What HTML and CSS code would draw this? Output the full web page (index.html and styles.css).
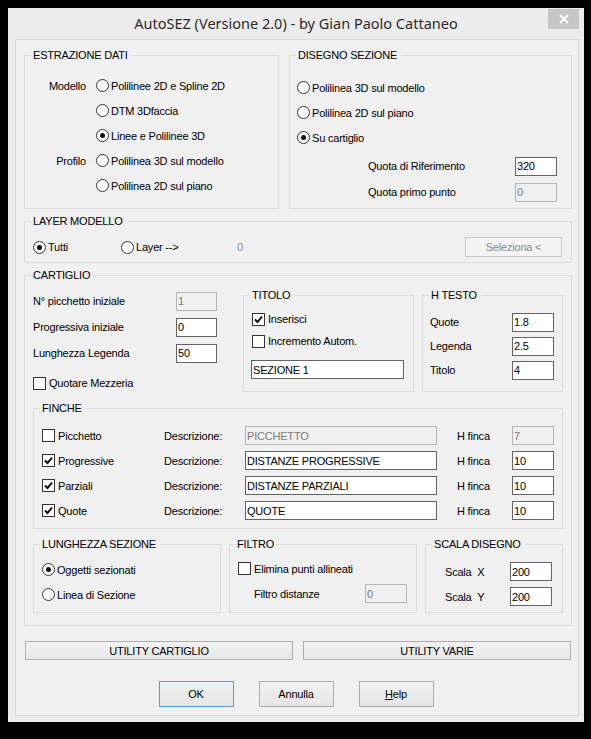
FILE: index.html
```html
<!DOCTYPE html>
<html lang="it">
<head>
<meta charset="utf-8">
<title>AutoSEZ</title>
<link rel="stylesheet" href="styles.css">
</head>
<body>
<div class="window">
  <div class="titlebar">
    <span></span>
    <span class="title">AutoSEZ (Versione 2.0) - by Gian Paolo Cattaneo</span>
    <span class="close"><svg width="10" height="10" viewBox="0 0 10 10"><path d="M1 1 L9 9 M9 1 L1 9" stroke="#fff" stroke-width="1.8" fill="none"/></svg></span>
  </div>
  <div class="panel">
    <div class="row-top">
      <fieldset class="group g-estr">
        <legend>ESTRAZIONE DATI</legend>
        <div class="estr-grid">
          <span class="lbl-r">Modello</span>
          <span class="opt"><span class="radio"></span>Polilinee 2D e Spline 2D</span>
          <span></span>
          <span class="opt"><span class="radio"></span>DTM 3Dfaccia</span>
          <span></span>
          <span class="opt"><span class="radio on"></span>Linee e Polilinee 3D</span>
          <span class="lbl-r">Profilo</span>
          <span class="opt"><span class="radio"></span>Polilinea 3D sul modello</span>
          <span></span>
          <span class="opt"><span class="radio"></span>Polilinea 2D sul piano</span>
        </div>
      </fieldset>
      <fieldset class="group g-dis">
        <legend>DISEGNO SEZIONE</legend>
        <div class="dis-opts">
          <span class="opt"><span class="radio"></span>Polilinea 3D sul modello</span>
          <span class="opt"><span class="radio"></span>Polilinea 2D sul piano</span>
          <span class="opt"><span class="radio on"></span>Su cartiglio</span>
        </div>
        <div class="quota-grid">
          <span>Quota di Riferimento</span>
          <input class="tb w42" type="text" value="320">
          <span>Quota primo punto</span>
          <input class="tb w42" type="text" value="0" disabled>
        </div>
      </fieldset>
    </div>

    <fieldset class="group g-layer">
      <legend>LAYER MODELLO</legend>
      <div class="layer-row">
        <span class="opt o-tutti"><span class="radio on"></span>Tutti</span>
        <span class="opt o-layer"><span class="radio"></span>Layer --&gt;</span>
        <span class="dim">0</span>
        <span class="btn btn-dis sel">Seleziona &lt;</span>
      </div>
    </fieldset>

    <fieldset class="group g-cart">
      <legend>CARTIGLIO</legend>
      <div class="cart-top">
        <div class="cart-left">
          <div class="lrow"><span>N° picchetto iniziale</span><input class="tb w41" type="text" value="1" disabled></div>
          <div class="lrow"><span>Progressiva iniziale</span><input class="tb w41" type="text" value="0"></div>
          <div class="lrow"><span>Lunghezza Legenda</span><input class="tb w41" type="text" value="50"></div>
          <div class="lrow lrow-chk"><span class="opt chk-opt"><span class="check"></span>Quotare Mezzeria</span></div>
        </div>
        <fieldset class="group g-titolo">
          <legend>TITOLO</legend>
          <div class="trow"><span class="opt chk-opt"><span class="check on"><svg width="11" height="11" viewBox="0 0 11 11"><path d="M2 5.5 L4.5 8 L9 2.5" stroke="#000" stroke-width="1.9" fill="none"/></svg></span>Inserisci</span></div>
          <div class="trow"><span class="opt chk-opt"><span class="check"></span>Incremento Autom.</span></div>
          <input class="tb titolo-in" type="text" value="SEZIONE 1">
        </fieldset>
        <fieldset class="group g-htesto">
          <legend>H TESTO</legend>
          <div class="ht-grid">
            <span>Quote</span><input class="tb w42" type="text" value="1.8">
            <span>Legenda</span><input class="tb w42" type="text" value="2.5">
            <span>Titolo</span><input class="tb w42" type="text" value="4">
          </div>
        </fieldset>
      </div>

      <fieldset class="group g-finche">
        <legend>FINCHE</legend>
        <div class="finche-grid">
          <span class="opt chk-opt"><span class="check"></span>Picchetto</span>
          <span>Descrizione:</span>
          <input class="tb desc" type="text" value="PICCHETTO" disabled>
          <span></span>
          <span>H finca</span>
          <input class="tb w42" type="text" value="7" disabled>

          <span class="opt chk-opt"><span class="check on"><svg width="11" height="11" viewBox="0 0 11 11"><path d="M2 5.5 L4.5 8 L9 2.5" stroke="#000" stroke-width="1.9" fill="none"/></svg></span>Progressive</span>
          <span>Descrizione:</span>
          <input class="tb desc" type="text" value="DISTANZE PROGRESSIVE">
          <span></span>
          <span>H finca</span>
          <input class="tb w42" type="text" value="10">

          <span class="opt chk-opt"><span class="check on"><svg width="11" height="11" viewBox="0 0 11 11"><path d="M2 5.5 L4.5 8 L9 2.5" stroke="#000" stroke-width="1.9" fill="none"/></svg></span>Parziali</span>
          <span>Descrizione:</span>
          <input class="tb desc" type="text" value="DISTANZE PARZIALI">
          <span></span>
          <span>H finca</span>
          <input class="tb w42" type="text" value="10">

          <span class="opt chk-opt"><span class="check on"><svg width="11" height="11" viewBox="0 0 11 11"><path d="M2 5.5 L4.5 8 L9 2.5" stroke="#000" stroke-width="1.9" fill="none"/></svg></span>Quote</span>
          <span>Descrizione:</span>
          <input class="tb desc" type="text" value="QUOTE">
          <span></span>
          <span>H finca</span>
          <input class="tb w42" type="text" value="10">
        </div>
      </fieldset>

      <div class="cart-bottom">
        <fieldset class="group g-lung">
          <legend>LUNGHEZZA SEZIONE</legend>
          <div class="brow"><span class="opt"><span class="radio on"></span>Oggetti sezionati</span></div>
          <div class="brow"><span class="opt"><span class="radio"></span>Linea di Sezione</span></div>
        </fieldset>
        <fieldset class="group g-filtro">
          <legend>FILTRO</legend>
          <div class="brow"><span class="opt chk-opt"><span class="check"></span>Elimina punti allineati</span></div>
          <div class="brow filtro-row"><span>Filtro distanze</span><input class="tb w42" type="text" value="0" disabled></div>
        </fieldset>
        <fieldset class="group g-scala">
          <legend>SCALA DISEGNO</legend>
          <div class="scala-grid">
            <span>Scala&nbsp;&nbsp;X</span><input class="tb w42" type="text" value="200">
            <span>Scala&nbsp;&nbsp;Y</span><input class="tb w42" type="text" value="200">
          </div>
        </fieldset>
      </div>
    </fieldset>

    <div class="util-row">
      <span class="btn">UTILITY CARTIGLIO</span>
      <span class="btn">UTILITY VARIE</span>
    </div>

    <div class="ok-row">
      <span class="btn btn-big btn-def">OK</span>
      <span class="btn btn-big">Annulla</span>
      <span class="btn btn-big"><u>H</u>elp</span>
    </div>
  </div>
</div>
</body>
</html>
```

FILE: styles.css
```css
* { box-sizing: border-box; }

html, body {
  margin: 0;
  background: #000;
}

body {
  padding: 8px;
  font-family: "Liberation Sans", Arial, sans-serif;
  font-size: 11px;
  letter-spacing: -0.2px;
  color: #000;
}

.window {
  width: 576px;
  height: 714px;
  background: #ececec;
  padding: 0 5px 6px 7px;
  display: flex;
  flex-direction: column;
}

.titlebar {
  height: 31px;
  display: grid;
  grid-template-columns: 1fr auto 1fr;
  align-items: start;
  margin-left: -7px;
  margin-right: -5px;
}

.title {
  font-family: "Noto Sans", "Open Sans", sans-serif;
  font-size: 14.5px;
  letter-spacing: 0;
  color: #2b2b2b;
  line-height: 20px;
  padding-top: 5px;
}

.close {
  justify-self: end;
  margin-top: 1px;
  margin-right: 5px;
  width: 31px;
  height: 20px;
  background: #c6c6c6;
  display: flex;
  align-items: center;
  justify-content: center;
}

.panel {
  flex: 1;
  background: #f0f0f0;
  border: 1px solid #d9d9d9;
  padding: 8px 6px 8px 8px;
  display: flex;
  flex-direction: column;
}

/* group boxes: --pl is the inner left padding; the legend is pulled back so
   its text always sits 9px from the group's outer left edge */
.group {
  --pl: 0px;
  --pt: 0px;
  --pr: 0px;
  --pb: 0px;
  margin: 0;
  padding: var(--pt) var(--pr) var(--pb) var(--pl);
  border: 1px solid #dcdcdc;
  min-inline-size: 0;
}

.group > legend {
  margin-left: calc(6px - var(--pl));
  padding: 0 4px 0 2px;
  line-height: 14px;
  height: 14px;
}

.opt {
  display: flex;
  align-items: center;
  gap: 2px;
  white-space: nowrap;
}

.chk-opt { gap: 3px; }

.radio {
  width: 13px;
  height: 13px;
  border: 1px solid #333;
  border-radius: 50%;
  background: #fff;
  display: flex;
  align-items: center;
  justify-content: center;
  flex: none;
}

.radio.on::after {
  content: "";
  width: 5px;
  height: 5px;
  border-radius: 50%;
  background: #111;
}

.check {
  width: 13px;
  height: 13px;
  border: 1px solid #333;
  background: #fff;
  display: flex;
  align-items: center;
  justify-content: center;
  flex: none;
}

.tb {
  font-family: "Liberation Sans", Arial, sans-serif;
  font-size: 11px;
  letter-spacing: -0.2px;
  height: 19px;
  margin: 0;
  padding: 0 1px;
  border: 1px solid #646464;
  background: #fff;
  color: #000;
  outline: none;
}

.tb:disabled {
  border-color: #b4b4b4;
  background: #f0f0f0;
  color: #7a7a7a;
}

.w41 { width: 41px; }
.w42 { width: 42px; }

/* row 1 */
.row-top {
  display: flex;
  gap: 10px;
}

.g-estr { width: 255px; --pt: 11px; --pb: 10px; }
.g-dis { flex: 1; --pt: 13px; --pb: 3px; --pl: 7px; }

.estr-grid {
  display: grid;
  grid-template-columns: 61px 1fr;
  grid-auto-rows: 25px;
  column-gap: 10px;
  align-items: center;
}

.lbl-r { text-align: right; }

.dis-opts {
  display: grid;
  grid-auto-rows: 25px;
  align-items: center;
}

.quota-grid {
  margin-top: 3px;
  margin-left: 71px;
  display: grid;
  grid-template-columns: 147px 42px;
  grid-auto-rows: 26px;
  align-items: center;
}

/* layer */
.g-layer {
  margin-top: 5px;
  --pt: 9px; --pr: 9px; --pb: 5px; --pl: 8px;
}

.layer-row {
  height: 20px;
  display: flex;
  align-items: center;
}

.o-tutti { width: 88px; }
.o-layer { width: 116px; }

.dim { color: #8a8a8a; flex: 1; }

.btn {
  display: flex;
  align-items: center;
  justify-content: center;
  border: 1px solid #adadad;
  background: linear-gradient(#f2f2f2, #e6e6e6);
  color: #000;
  white-space: nowrap;
}

.btn-dis {
  border-color: #c8c8c8;
  background: #f4f4f4;
  color: #8a8a8a;
}

.sel { width: 97px; height: 20px; }

/* cartiglio */
.g-cart {
  margin-top: 5px;
  --pt: 6px; --pr: 8px; --pb: 12px; --pl: 8px;
}

.cart-top {
  display: flex;
  align-items: flex-start;
}

.cart-left {
  width: 210px;
  display: flex;
  flex-direction: column;
}

.lrow {
  height: 26px;
  display: grid;
  grid-template-columns: 143px 41px;
  align-items: center;
}

.lrow-chk {
  margin-top: 4px;
  display: flex;
}

.g-titolo {
  width: 171px;
  margin-right: 8px;
  --pt: 6px; --pr: 8px; --pb: 12px; --pl: 8px;
}

.trow {
  height: 22px;
  display: flex;
  align-items: center;
}

.titolo-in {
  display: block;
  margin-top: 8px;
  margin-left: -1px;
  width: 153px;
}

.g-htesto {
  width: 141px;
  --pt: 8px; --pr: 8px; --pb: 9px; --pl: 7px;
}

.ht-grid {
  display: grid;
  grid-template-columns: 82px 42px;
  grid-auto-rows: 24px;
  align-items: center;
}

.g-finche {
  margin-top: 5px;
  --pt: 8px; --pr: 8px; --pb: 5px; --pl: 8px;
}

.finche-grid {
  display: grid;
  grid-template-columns: 122px 81px 192px 20px 55px 42px;
  grid-auto-rows: 25px;
  align-items: center;
}

.desc { width: 192px; }

.cart-bottom {
  margin-top: 8px;
  display: flex;
  gap: 8px;
}

.g-lung { width: 188px; --pt: 6px; --pr: 8px; --pb: 5px; --pl: 8px; }
.g-filtro { width: 188px; --pt: 5px; --pr: 8px; --pb: 6px; --pl: 8px; }
.g-filtro > legend { margin-left: calc(5px - var(--pl)); }
.g-scala { flex: 1; --pt: 8px; --pr: 8px; --pb: 3px; --pl: 19px; }

.brow {
  height: 25px;
  display: flex;
  align-items: center;
}

.filtro-row {
  display: grid;
  grid-template-columns: 111px 42px;
  padding-left: 16px;
}

.scala-grid {
  display: grid;
  grid-template-columns: 65px 42px;
  grid-auto-rows: 25px;
  align-items: center;
}

/* bottom buttons */
.util-row {
  margin: 15px 1px 0 1px;
  display: flex;
  gap: 10px;
}

.util-row .btn {
  flex: 1;
  height: 19px;
}

.ok-row {
  margin-top: 21px;
  padding-right: 4px;
  display: flex;
  justify-content: center;
  gap: 25px;
}

.btn-big {
  width: 75px;
  height: 26px;
}

.btn-def {
  border-color: #5a9ad8;
}
```
